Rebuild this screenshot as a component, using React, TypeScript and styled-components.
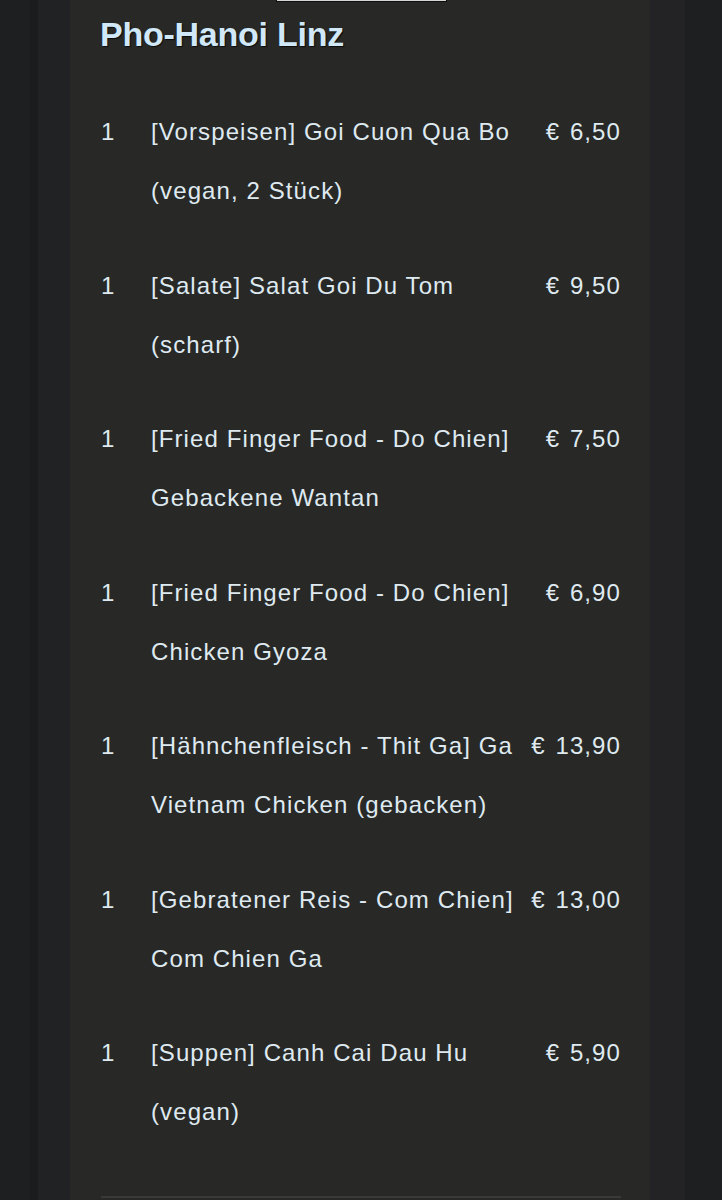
import React, { FC } from "react";
import styled, { createGlobalStyle } from "styled-components";

interface OrderItem {
  readonly qty: number;
  readonly lines: string[];
  readonly price: string;
}

const ITEMS: OrderItem[] = [
  { qty: 1, lines: ["[Vorspeisen] Goi Cuon Qua Bo", "(vegan, 2 Stück)"], price: "€ 6,50" },
  { qty: 1, lines: ["[Salate] Salat Goi Du Tom", "(scharf)"], price: "€ 9,50" },
  { qty: 1, lines: ["[Fried Finger Food - Do Chien]", "Gebackene Wantan"], price: "€ 7,50" },
  { qty: 1, lines: ["[Fried Finger Food - Do Chien]", "Chicken Gyoza"], price: "€ 6,90" },
  { qty: 1, lines: ["[Hähnchenfleisch - Thit Ga] Ga", "Vietnam Chicken (gebacken)"], price: "€ 13,90" },
  { qty: 1, lines: ["[Gebratener Reis - Com Chien]", "Com Chien Ga"], price: "€ 13,00" },
  { qty: 1, lines: ["[Suppen] Canh Cai Dau Hu", "(vegan)"], price: "€ 5,90" },
];

const FONT = `"Liberation Sans", Arial, Helvetica, sans-serif`;

export const OrderSummary: FC = () => (
  <Panel>
    <TopTab />
    <Title>Pho-Hanoi Linz</Title>
    <Items>
      {ITEMS.map((item, i) => (
        <Row key={i}>
          <Qty>{item.qty}</Qty>
          <Name>
            {item.lines.map((line) => (
              <NameLine key={line}>{line}</NameLine>
            ))}
          </Name>
          <Price>{item.price}</Price>
        </Row>
      ))}
    </Items>
    <Divider />
  </Panel>
);

const App: FC = () => (
  <>
    <GlobalStyle />
    <Page>
      <Frame>
        <OrderSummary />
      </Frame>
    </Page>
  </>
);

export default App;

const GlobalStyle = createGlobalStyle`
  html, body {
    margin: 0;
    padding: 0;
    background: #1e1f21;
    font-family: ${FONT};
  }
`;

const Page = styled.div`
  display: flex;
  min-height: 1200px;
  padding: 0 37px 0 30px;
  background: #1e1f21;
`;

const Frame = styled.div`
  display: flex;
  flex: 1;
  padding: 0 35px 0 32px;
  border-left: 8px solid #1b1c1e;
  background: linear-gradient(
    to right,
    #212224 0,
    #212224 50%,
    #232325 50%,
    #232325 100%
  );
`;

const Panel = styled.section`
  flex: 1;
  display: flex;
  flex-direction: column;
  padding: 0 29px 0 31px;
  background: #282827;
`;

const TopTab = styled.div`
  width: 169px;
  height: 1px;
  margin-left: 175px;
  background: #d6d6d6;
  border: 1px solid #0f0f0f;
  border-top: none;
`;

const Title = styled.h1`
  margin: 12px 0 0 -1px;
  font-size: 34px;
  line-height: 40px;
  font-weight: 700;
  letter-spacing: -0.25px;
  color: #d0e8f7;
  text-shadow: 1px 1px 1px #0c0c0c;
`;

const Items = styled.ol`
  display: flex;
  flex-direction: column;
  gap: 35.5px;
  margin: 48px 0 0;
  padding: 0;
  list-style: none;
`;

const Row = styled.li`
  display: grid;
  grid-template-columns: 50px 1fr auto;
  font-size: 24px;
  line-height: 59px;
  letter-spacing: 1.1px;
  color: #dfeaf0;
`;

const Qty = styled.span``;

const Name = styled.div`
  display: flex;
  flex-direction: column;
`;

const NameLine = styled.span`
  white-space: nowrap;
`;

const Price = styled.span`
  text-align: right;
  white-space: nowrap;
  word-spacing: 2px;
`;

const Divider = styled.hr`
  margin: 54.5px 0 0;
  border: none;
  height: 2px;
  background: #3a3a3a;
`;
